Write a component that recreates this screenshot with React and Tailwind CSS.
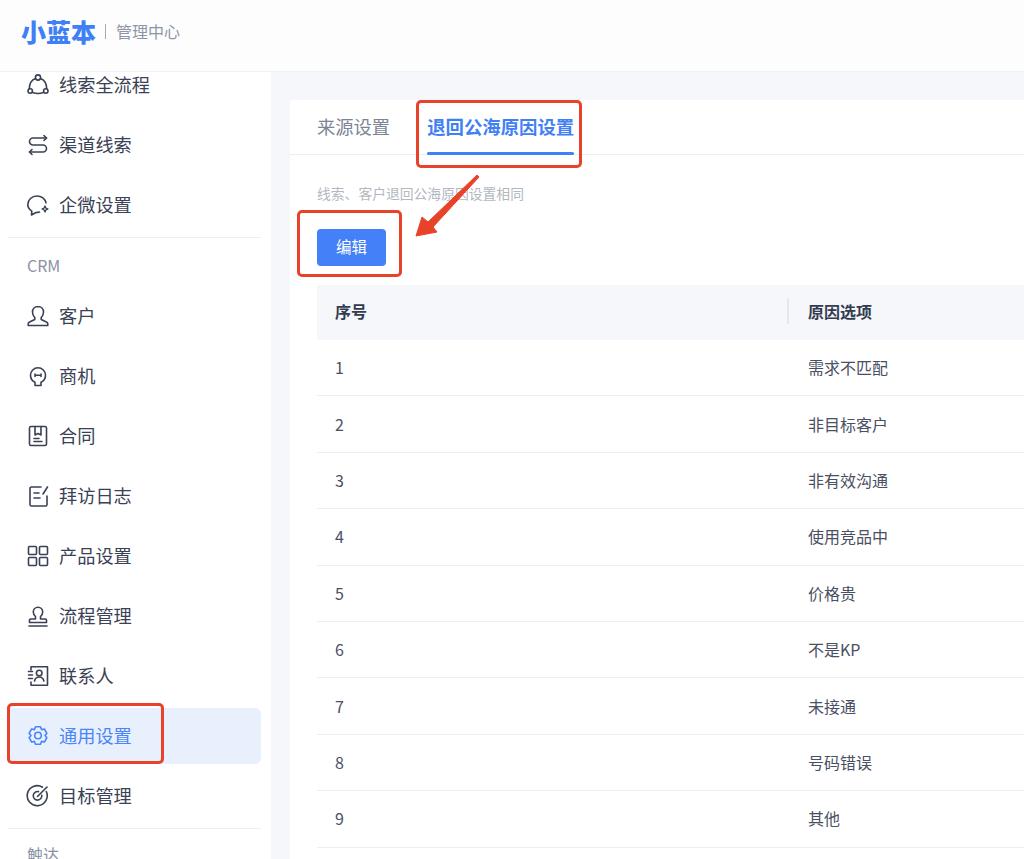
const stroke = {
  fill: "none",
  stroke: "currentColor",
  strokeWidth: 1.6,
  strokeLinecap: "round",
  strokeLinejoin: "round",
};

function Icon({ children }) {
  return (
    <svg viewBox="0 0 24 24" {...stroke} className="w-[24px] h-[24px] shrink-0">
      {children}
    </svg>
  );
}

const icons = {
  flow: (
    <Icon>
      <circle cx="12" cy="4.5" r="2.6" />
      <circle cx="4.2" cy="18" r="2.2" />
      <circle cx="19.8" cy="18" r="2.2" />
      <path d="M9.6 5.6C5.8 7 3.4 10.5 3.3 15.8" />
      <path d="M14.4 5.6c3.8 1.4 6.2 4.9 6.3 10.2" />
      <path d="M6.6 19.6c3.4 1.2 7.4 1.2 10.8 0" />
    </Icon>
  ),
  channel: (
    <Icon>
      <path d="M20.5 5H7a3.5 3.500 0 0 0 0 7h10a3.500 3.500 0 0 1 0 7H3.500" />
      <path d="M18 2.500 20.500 5 18 7.500" />
      <path d="M6 16.500 3.500 19 6 21.500" />
    </Icon>
  ),
  wechat: (
    <Icon>
      <path d="M13.500 19a11 11 0 0 1-3.500.500l-4.500 2.500.3-3.900C3.300 16.500 1.800 14.200 1.800 11.500 1.800 6.800 5.800 3 11 3c4.500 0 8.200 2.900 9 6.800" />
      <path d="M19 13l.9 2.100 2.100.9-2.100.9-.9 2.100-.9-2.100-2.100-.9 2.100-.9z" strokeWidth="1.300" />
    </Icon>
  ),
  user: (
    <Icon>
      <path d="M12 2.500c-3.300 0-5.500 2.300-5.500 5.500 0 2.500 1 4.300 2.300 5.600v1.900L3.600 18c-.9.4-1.400 1.100-1.400 2v1.500h19.600V20c0-.9-.5-1.600-1.400-2l-5.200-2.500v-1.900c1.300-1.300 2.300-3.100 2.300-5.600 0-3.200-2.200-5.500-5.500-5.500z" />
    </Icon>
  ),
  bulb: (
    <Icon>
      <path d="M9 18.300C6.200 17 4.500 14.500 4.500 11.300a7.500 7.500 0 0 1 15 0c0 3.200-1.700 5.700-4.500 7v3.200H9z" />
      <path d="M9 10v2.500M15 10v2.500M9 11.200h6" />
    </Icon>
  ),
  contract: (
    <Icon>
      <rect x="3.500" y="2.500" width="17" height="19" rx="1.500" />
      <path d="M9 2.500V11l3-1.500 3 1.500V2.500" />
      <path d="M8 17.500h8M8 14.500h5" />
    </Icon>
  ),
  visit: (
    <Icon>
      <path d="M15 3H5.500A1.500 1.500 0 0 0 4 4.500v16A1.500 1.500 0 0 0 5.500 22h14a1.500 1.500 0 0 0 1.500-1.500V12" />
      <path d="M8 9h5M8 14h6" />
      <path d="M21.500 3 17 10" />
    </Icon>
  ),
  grid: (
    <Icon>
      <rect x="2.500" y="2.500" width="8" height="8" rx="1" />
      <rect x="13.500" y="2.500" width="8" height="8" rx="1" />
      <rect x="2.500" y="13.500" width="8" height="8" rx="1" />
      <rect x="13.500" y="13.500" width="8" height="8" rx="1" />
    </Icon>
  ),
  stamp: (
    <Icon>
      <path d="M3 22h18" />
      <path d="M3.500 18.500v-2.300c0-.7.500-1.200 1.200-1.200h4.800v-2.500C8 11.300 7.300 9.800 7.300 8a4.700 4.700 0 0 1 9.400 0c0 1.800-.7 3.300-2.200 4.500V15h4.800c.7 0 1.200.5 1.200 1.200v2.300z" />
    </Icon>
  ),
  contact: (
    <Icon>
      <path d="M5 6V2.800h16.500v18.400H5V18" />
      <circle cx="13.200" cy="9" r="2.800" />
      <path d="M8.500 17c.6-2.600 2.400-4 4.700-4s4.100 1.400 4.700 4" />
      <path d="M2.500 7.500h4M2.500 11h4M2.500 14.500h4" />
    </Icon>
  ),
  gear: (
    <Icon>
      <path d="M9.500 2.800h5l1 2.800 2.900-.6 2.500 4.300-1.900 2.200 1.900 2.200-2.500 4.300-2.900-.6-1 2.800h-5l-1-2.800-2.900.6-2.500-4.300 1.900-2.200-1.900-2.200 2.500-4.300 2.900.6z" />
      <circle cx="12" cy="11.500" r="3.300" />
    </Icon>
  ),
  target: (
    <Icon>
      <path d="M20.300 7.500A10 10 0 1 1 16.500 3.200" />
      <path d="M15.800 11.200a4.300 4.300 0 1 1-3.300-3.600" />
      <path d="M11.500 12.500 21 3" />
    </Icon>
  ),
};

function NavItem({ icon, label, active }) {
  return (
    <div
      className={`h-[56px] ml-[8px] mr-[10px] pl-[18px] flex items-center gap-[9px] rounded-[6px] ${
        active ? "bg-[#e9f0fd] text-[#4a86f7]" : "text-[#3a4154]"
      }`}
    >
      {icons[icon]}
      <span className="text-[18.2px]">{label}</span>
    </div>
  );
}

function Sidebar() {
  return (
    <aside className="w-[271px] h-full shrink-0 bg-white overflow-hidden">
      <div className="-mt-[15px] flex flex-col">
        <div className="flex flex-col gap-[4px]">
          <NavItem icon="flow" label="线索全流程" />
          <NavItem icon="channel" label="渠道线索" />
          <NavItem icon="wechat" label="企微设置" />
        </div>
        <div className="ml-[8px] mr-[10px] mt-[4px] border-t border-[#eceef3]" />
        <div className="h-[50px] pl-[27px] pt-[15px] text-[16px] leading-[24px] text-[#8a91a5]">CRM</div>
        <div className="flex flex-col gap-[4px]">
          <NavItem icon="user" label="客户" />
          <NavItem icon="bulb" label="商机" />
          <NavItem icon="contract" label="合同" />
          <NavItem icon="visit" label="拜访日志" />
          <NavItem icon="grid" label="产品设置" />
          <NavItem icon="stamp" label="流程管理" />
          <NavItem icon="contact" label="联系人" />
          <NavItem icon="gear" label="通用设置" active />
          <NavItem icon="target" label="目标管理" />
        </div>
        <div className="ml-[8px] mr-[10px] mt-[4px] border-t border-[#eceef3]" />
        <div className="pl-[27px] pt-[13px] text-[16px] leading-[24px] text-[#8a91a5]">触达</div>
      </div>
    </aside>
  );
}

const reasons = ["需求不匹配", "非目标客户", "非有效沟通", "使用竞品中", "价格贵", "不是KP", "未接通", "号码错误", "其他"];

function ReasonTable() {
  return (
    <div className="mt-[19px] ml-[27px] text-[16px]">
      <div className="h-[55px] pb-[3px] flex items-center bg-[#f5f7fb] font-bold text-[#343b4f]">
        <div className="w-[472px] pl-[18px] border-r-2 border-[#e6e8ee] leading-[26px] mr-[19px]">序号</div>
        <div>原因选项</div>
      </div>
      {reasons.map((reason, i) => (
        <div key={reason} className="h-[56.4px] pb-[1px] flex items-center border-b border-[#eceef3] text-[#4a5063]">
          <div className="w-[491px] pl-[18px]">{i + 1}</div>
          <div>{reason}</div>
        </div>
      ))}
    </div>
  );
}

function Annotations() {
  return (
    <>
      <div className="absolute left-[416px] top-[100px] w-[166px] h-[68px] border-[3px] border-[#e8432a] rounded-[5px]" />
      <div className="absolute left-[297px] top-[210px] w-[105px] h-[67px] border-[3px] border-[#e8432a] rounded-[5px]" />
      <div className="absolute left-[7px] top-[703px] w-[157px] h-[61px] border-[3px] border-[#e8432a] rounded-[5px]" />
      <svg className="absolute left-[410px] top-[170px] w-[75px] h-[72px]" viewBox="0 0 75 72">
        <path d="M6 66 12 47 18 52 67 5 69 7 23 57 27 62Z" fill="#e8432a" stroke="#e8432a" strokeWidth="1" strokeLinejoin="round" />
      </svg>
    </>
  );
}

export default function App() {
  return (
    <div
      className="relative w-[1024px] h-[859px] overflow-hidden bg-[#f5f7fb] flex flex-col"
      style={{ fontFamily: '"Noto Sans CJK SC", "Noto Sans", sans-serif' }}
    >
      <header className="relative z-10 h-[72px] shrink-0 bg-[#fdfdfe] border-b border-[#f0f1f5] flex items-center pl-[21px] pb-[9px]">
        <span className="text-[25px] leading-none font-black text-[#3f80f5]">小蓝本</span>
        <span className="ml-[9px] w-px h-[15px] bg-[#a5abb9]" />
        <span className="ml-[10px] text-[16px] text-[#8e95a6]">管理中心</span>
      </header>
      <div className="flex-1 min-h-0 flex">
        <Sidebar />
        <main className="flex-1 min-w-0 pl-[19px] pt-[28px]">
          <div className="bg-white h-full">
            <div className="h-[55px] border-b border-[#eceef3] flex pl-[27px] gap-[37px]">
              <div className="h-full flex items-center text-[18.3px] text-[#7d8496]">来源设置</div>
              <div className="relative h-full flex items-center text-[18.4px] font-bold text-[#3f80f5]">
                退回公海原因设置
                <div className="absolute left-0 right-0 -bottom-px h-[3px] rounded-full bg-[#3f80f5]" />
              </div>
            </div>
            <p className="mt-[28px] ml-[27px] text-[13.8px] leading-[20px] text-[#b3b7c0]">线索、客户退回公海原因设置相同</p>
            <button className="block mt-[26px] ml-[27px] w-[69px] h-[37px] pb-[2px] rounded-[4px] bg-[#4480f7] text-white text-[15.5px]">
              编辑
            </button>
            <ReasonTable />
          </div>
        </main>
      </div>
      <Annotations />
    </div>
  );
}
